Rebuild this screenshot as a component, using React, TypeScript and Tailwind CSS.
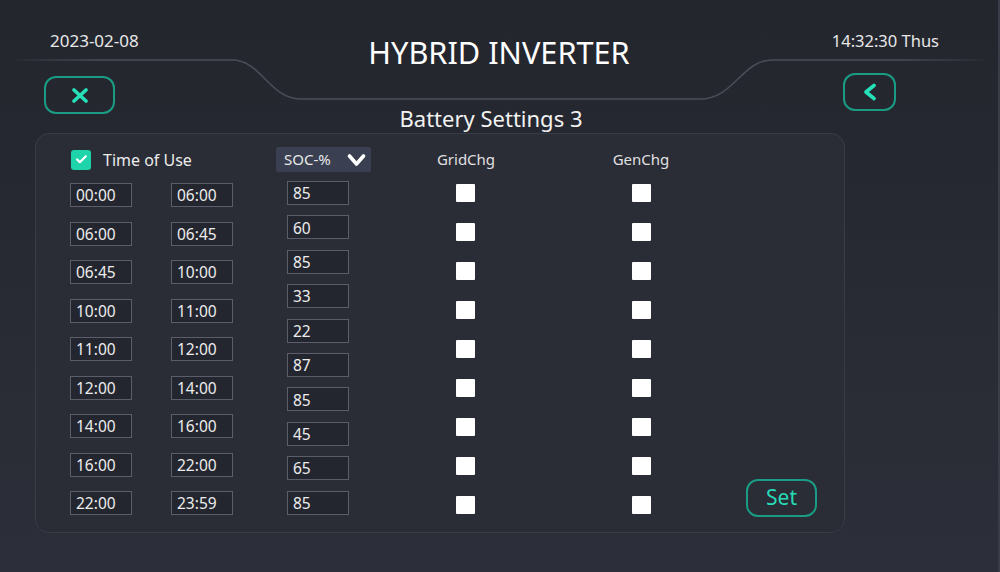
import React from 'react';
import { Check } from 'lucide-react';

const TIMES: [string, string][] = [
  ['00:00', '06:00'],
  ['06:00', '06:45'],
  ['06:45', '10:00'],
  ['10:00', '11:00'],
  ['11:00', '12:00'],
  ['12:00', '14:00'],
  ['14:00', '16:00'],
  ['16:00', '22:00'],
  ['22:00', '23:59'],
];

const SOC = ['85', '60', '85', '33', '22', '87', '85', '45', '65', '85'];

function ValueBox({ value }: { value: string }) {
  return (
    <div className="w-[62px] h-[24px] border border-[#5b5e68] bg-[#24262f] pl-[5px] pt-[2px] flex items-center text-[15.5px] leading-none text-[#ececec]">
      {value}
    </div>
  );
}

function WhiteBox() {
  return <div className="w-[19px] h-[18px] bg-white rounded-[1px]" />;
}

function HeaderLines() {
  return (
    <svg className="absolute inset-0 pointer-events-none" width="1000" height="572">
      <defs>
        <linearGradient id="hl" x1="0" y1="0" x2="1000" y2="0" gradientUnits="userSpaceOnUse">
          <stop offset="0" stopColor="#4a4d59" stopOpacity="0" />
          <stop offset="0.1" stopColor="#4a4d59" />
          <stop offset="0.9" stopColor="#4a4d59" />
          <stop offset="1" stopColor="#4a4d59" stopOpacity="0" />
        </linearGradient>
      </defs>
      <path
        d="M 15 60 H 232 C 262 60, 268 99, 302 99 H 700 C 734 99, 742 60, 772 60 H 985"
        fill="none"
        stroke="url(#hl)"
        strokeWidth="1.5"
      />
    </svg>
  );
}

export default function App() {
  return (
    <div className="relative w-[1000px] h-[572px] overflow-hidden bg-linear-to-b from-[#24262e] to-[#2c2e39] text-[#f0f0f0] font-['Noto_Sans',sans-serif] border-r-2 border-[#3a3d48]">
      <HeaderLines />

      {/* top bar */}
      <div className="relative grid grid-cols-[1fr_auto_1fr] items-start pt-[29px] px-[50px]">
        <div className="text-[17px] leading-[24px] text-[#e8e8e8]">2023-02-08</div>
        <div className="text-[30.7px] leading-[40px] text-white pt-[3px]">HYBRID INVERTER</div>
        <div className="text-[16.5px] leading-[24px] text-[#e8e8e8] text-right pr-[9px]">14:32:30 Thus</div>
      </div>

      {/* buttons row */}
      <div className="relative flex justify-between items-start px-[44px] pr-[102px] -mt-[5px] h-[42px]">
        <button className="mt-[9px] w-[71px] h-[38px] rounded-[12px] border-2 border-[#1a9c84] flex items-center justify-center">
          <svg width="18" height="15" viewBox="0 0 18 15">
            <path d="M3 2 L15 13 M15 2 L3 13" stroke="#25e0b8" strokeWidth="3.6" strokeLinecap="round" />
          </svg>
        </button>
        <button className="mt-[6px] w-[53px] h-[38px] rounded-[12px] border-2 border-[#1a9c84] flex items-center justify-center">
          <svg width="16" height="18" viewBox="0 0 16 18">
            <path d="M12 2.5 L4 9 L12 15.5" fill="none" stroke="#25e0b8" strokeWidth="3.6" strokeLinecap="round" strokeLinejoin="round" />
          </svg>
        </button>
      </div>

      <div className="relative text-center text-[22px] leading-[28px] text-[#f2f2f2] -mt-[5px] mr-[16px]">
        Battery Settings 3
      </div>

      {/* panel */}
      <div className="relative ml-[35px] mt-[1px] w-[810px] h-[400px] rounded-[14px] border border-[#393c47] bg-[#2a2c36] flex pl-[34px] pt-[13px]">
        {/* time column */}
        <div className="w-[163px] flex flex-col">
          <div className="h-[25px] flex items-center gap-[12px]">
            <div className="w-[20px] h-[20px] ml-[1px] rounded-[3px] bg-[#1ed4ab] flex items-center justify-center">
              <Check size={13} strokeWidth={4} color="#ffffff" />
            </div>
            <span className="text-[16px] text-[#ececec]">Time of Use</span>
          </div>
          <div className="mt-[11px] flex flex-col gap-[14.5px]">
            {TIMES.map(([a, b], i) => (
              <div key={i} className="flex justify-between">
                <ValueBox value={a} />
                <ValueBox value={b} />
              </div>
            ))}
          </div>
        </div>

        {/* SOC column */}
        <div className="ml-[43px] w-[95px] flex flex-col">
          <div className="h-[25px] rounded-[2px] bg-[#3a4051] flex items-center justify-between pl-[8px] pr-[5px]">
            <span className="text-[15px] text-[#e8e8e8]">SOC-%</span>
            <svg width="19" height="14" viewBox="0 0 19 14">
              <path d="M2.5 3 L9.5 11 L16.5 3" fill="none" stroke="#ffffff" strokeWidth="3.6" strokeLinecap="round" strokeLinejoin="round" />
            </svg>
          </div>
          <div className="mt-[9px] ml-[11px] flex flex-col gap-[10.4px]">
            {SOC.map((v, i) => (
              <ValueBox key={i} value={v} />
            ))}
          </div>
        </div>

        {/* GridChg column */}
        <div className="ml-[44px] w-[100px] flex flex-col items-center">
          <div className="h-[25px] flex items-center text-[15px] text-[#e0e0e0] ml-[2px]">GridChg</div>
          <div className="mt-[12px] flex flex-col gap-[21px]">
            {TIMES.map((_, i) => (
              <WhiteBox key={i} />
            ))}
          </div>
        </div>

        {/* GenChg column */}
        <div className="ml-[76px] w-[100px] flex flex-col items-center">
          <div className="h-[25px] flex items-center text-[15px] text-[#e0e0e0]">GenChg</div>
          <div className="mt-[12px] flex flex-col gap-[21px]">
            {TIMES.map((_, i) => (
              <WhiteBox key={i} />
            ))}
          </div>
        </div>

        {/* Set button */}
        <div className="ml-auto mr-[27px] flex flex-col justify-end pb-[15px]">
          <button className="w-[71px] h-[38px] rounded-[12px] border-2 border-[#1a9c84] text-[21px] leading-none text-[#25dcb6] flex items-center justify-center pb-[2px]">
            Set
          </button>
        </div>
      </div>
    </div>
  );
}
